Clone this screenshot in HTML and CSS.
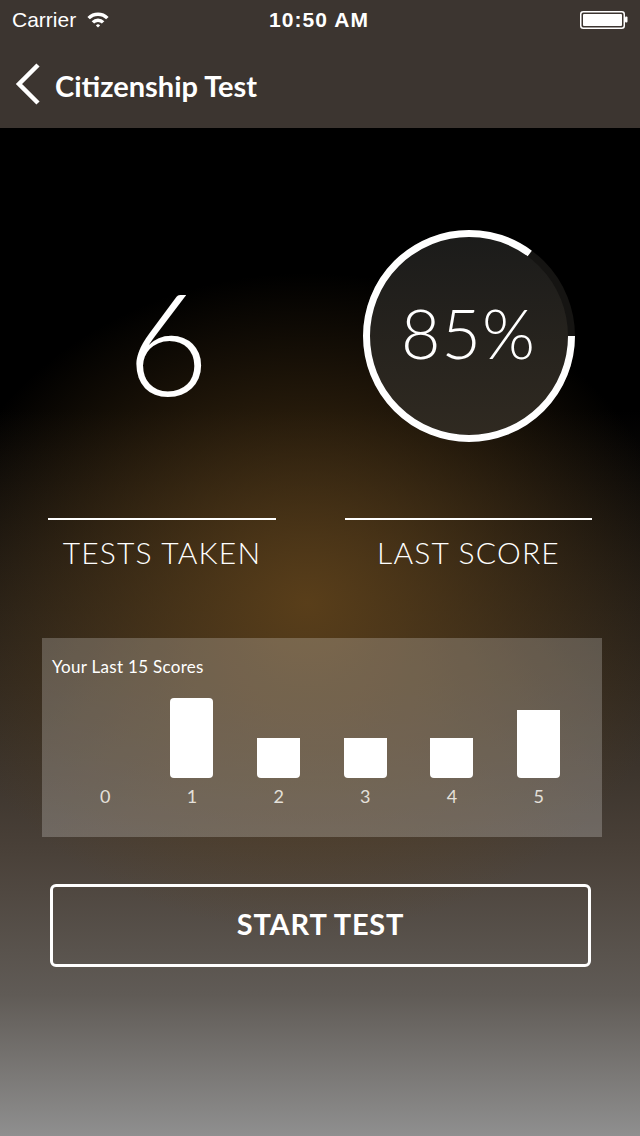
FILE: index.html
```html
<!DOCTYPE html>
<html>
	<head>
		<meta charset="UTF-8">
		<title>Citizenship Test</title>
		<link rel="stylesheet" href="styles.css">
	</head>
	<body>
		<div class="phone">
			<div class="topBar">
				<div class="status">
					<div class="statusLeft">
						<span class="carrier">Carrier</span>
						<svg class="wifi" width="22" height="17" viewBox="0 0 22 17">
							<path d="M0.4 5.9 A15 15 0 0 1 21.6 5.9 L19.13 8.37 A11.5 11.5 0 0 0 2.87 8.37 Z" fill="#fff"/>
							<path d="M4.64 10.14 A9 9 0 0 1 17.36 10.14 L14.89 12.61 A5.5 5.5 0 0 0 7.11 12.61 Z" fill="#fff"/>
							<path d="M11 16.5 L8.88 14.38 A3 3 0 0 1 13.12 14.38 Z" fill="#fff"/>
						</svg>
					</div>
					<div class="statusTime">10:50 AM</div>
					<div class="statusRight">
						<svg class="battery" width="48" height="18" viewBox="0 0 48 18">
							<rect x="0.75" y="0.75" width="43.5" height="16.5" rx="2.5" fill="none" stroke="#fff" stroke-width="1.5"/>
							<rect x="3" y="3" width="39" height="12" rx="1" fill="#fff"/>
							<rect x="45" y="5.5" width="2.5" height="6" rx="1" fill="#fff"/>
						</svg>
					</div>
				</div>
				<div class="nav">
					<svg class="back" width="26" height="42" viewBox="0 0 26 42">
						<path d="M23 2 L4 21 L23 40" fill="none" stroke="#fff" stroke-width="4.5"/>
					</svg>
					<h1 class="navTitle">Citizenship Test</h1>
				</div>
			</div>

			<div class="main">
				<div class="stats">
					<div class="stat">
						<div class="statVisual">
							<span class="statCount">6</span>
						</div>
						<div class="statRule"></div>
						<div class="statLabel">TESTS TAKEN</div>
					</div>
					<div class="stat">
						<div class="statVisual ring">
							<svg class="ringSvg" width="212" height="212" viewBox="0 0 212 212">
								<defs>
									<linearGradient id="ringFill" x1="0" y1="0" x2="0" y2="1">
										<stop offset="0" stop-color="#1b1b1a"/>
										<stop offset="1" stop-color="#302a21"/>
									</linearGradient>
								</defs>
								<circle cx="106" cy="106" r="102.5" fill="url(#ringFill)" stroke="#151412" stroke-width="7"/>
								<circle cx="106" cy="106" r="102.5" fill="none" stroke="#fff" stroke-width="7" stroke-dasharray="547.4 644"/>
							</svg>
							<span class="ringValue">85%</span>
						</div>
						<div class="statRule"></div>
						<div class="statLabel">LAST SCORE</div>
					</div>
				</div>

				<div class="scores">
					<div class="scoresTitle">Your Last 15 Scores</div>
					<div class="scoresBars">
						<div class="scoresCol"><div class="bar" style="height:0px"></div></div>
						<div class="scoresCol"><div class="bar round" style="height:80px"></div></div>
						<div class="scoresCol"><div class="bar" style="height:40px"></div></div>
						<div class="scoresCol"><div class="bar" style="height:40px"></div></div>
						<div class="scoresCol"><div class="bar" style="height:40px"></div></div>
						<div class="scoresCol"><div class="bar" style="height:68px"></div></div>
					</div>
					<div class="scoresAxis">
						<span>0</span><span>1</span><span>2</span><span>3</span><span>4</span><span>5</span>
					</div>
				</div>

				<button class="startBtn" type="button">START TEST</button>
			</div>
		</div>
	</body>
</html>
```

FILE: styles.css
```css
*,
*::before,
*::after{
	box-sizing: border-box;
}
html,body{
	margin: 0;
	padding: 0;
}
body{
	background: #000;
	font-family: Lato, "Open Sans", sans-serif;
	color: #fff;
}
.phone{
	width: 640px;
	height: 1136px;
	display: flex;
	flex-direction: column;
	overflow: hidden;
}
.topBar{
	background: #3c3530;
}
.status{
	height: 40px;
	display: grid;
	grid-template-columns: 1fr auto 1fr;
	align-items: center;
	padding: 0 12px;
	font-family: "Liberation Sans", Arial, sans-serif;
	font-size: 21px;
	line-height: 40px;
}
.statusLeft{
	display: flex;
	align-items: center;
	gap: 11px;
}
.wifi{
	margin-top: -2px;
}
.statusTime{
	font-weight: bold;
	letter-spacing: 1.1px;
	margin-right: 2px;
}
.statusRight{
	display: flex;
	justify-content: flex-end;
	align-items: center;
}
.nav{
	height: 88px;
	display: flex;
	align-items: center;
	padding-left: 15px;
	gap: 14px;
}
.back{
	display: block;
}
.navTitle{
	margin: 0;
	font-size: 29px;
	font-weight: bold;
	line-height: 1;
	margin-top: 2px;
}
.main{
	flex: 1;
	padding-top: 102px;
	background:
		radial-gradient(ellipse 380px 330px at 48% 475px, rgba(92,64,26,0.95), rgba(92,64,26,0) 100%),
		linear-gradient(#000 0%, #000 28%, #2e271f 55%, #4a4139 72%, #605b56 86%, #8f8f8f 100%);
}
.stats{
	display: grid;
	grid-template-columns: 228px 247px;
	column-gap: 69px;
	padding: 0 48px;
}
.stat{
	display: flex;
	flex-direction: column;
	align-items: center;
}
.statVisual{
	height: 212px;
	width: 100%;
	display: flex;
	align-items: center;
	justify-content: center;
}
.statCount{
	font-size: 142px;
	font-weight: 300;
	line-height: 1;
	margin: 10px 0 0 12px;
}
.ring{
	position: relative;
}
.ringSvg{
	position: absolute;
	left: 50%;
	top: 0;
	margin-left: -106px;
}
.ringValue{
	position: relative;
	font-size: 68px;
	font-weight: 300;
	letter-spacing: 1px;
	line-height: 1;
	margin-bottom: 6px;
}
.statRule{
	width: 100%;
	height: 2px;
	background: #fff;
	margin-top: 76px;
}
.statLabel{
	margin-top: 14px;
	font-size: 30px;
	font-weight: 300;
	letter-spacing: 1.2px;
	line-height: 36px;
}
.scores{
	margin: 68px 0 0 42px;
	width: 560px;
	height: 199px;
	padding: 19px 20px 0;
	background: rgba(255,255,255,0.22);
}
.scoresTitle{
	margin-left: -10px;
	font-size: 17px;
	letter-spacing: 0.3px;
	line-height: 20px;
}
.scoresBars{
	height: 101px;
	display: grid;
	grid-template-columns: repeat(6, 1fr);
	align-items: end;
}
.scoresCol{
	display: flex;
	justify-content: center;
}
.bar{
	width: 43px;
	background: #fff;
	border-radius: 0 0 4px 4px;
}
.bar.round{
	border-radius: 4px;
}
.scoresAxis{
	margin-top: 8px;
	display: grid;
	grid-template-columns: repeat(6, 1fr);
	text-align: center;
	font-size: 18px;
	line-height: 20px;
	color: #e4e0da;
}
.startBtn{
	display: flex;
	align-items: center;
	justify-content: center;
	margin: 47px 0 0 50px;
	width: 541px;
	height: 83px;
	padding: 0 0 4px;
	border: 3px solid #fff;
	border-radius: 6px;
	background: none;
	color: #fff;
	font-family: Lato, "Open Sans", sans-serif;
	font-size: 29px;
	font-weight: bold;
	letter-spacing: 0.8px;
	cursor: pointer;
}
```
